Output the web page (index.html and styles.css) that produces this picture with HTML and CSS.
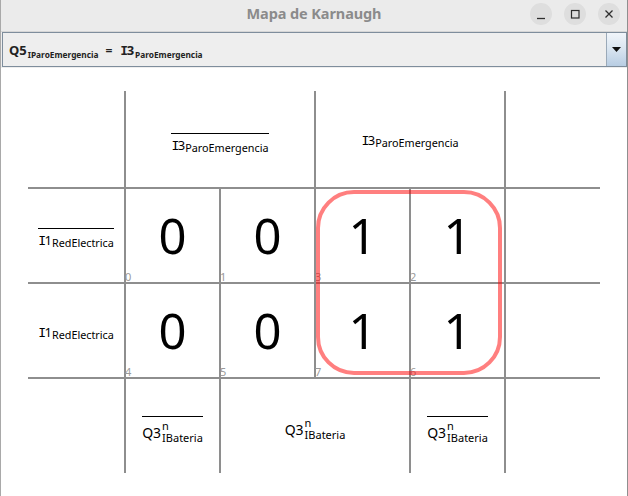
FILE: index.html
```html
<!DOCTYPE html>
<html>
<head>
<meta charset="utf-8">
<title>Mapa de Karnaugh</title>
<link rel="stylesheet" href="styles.css">
</head>
<body>
<div class="window">
  <div class="titlebar">
    <div class="tb-side"></div>
    <div class="title">Mapa de Karnaugh</div>
    <div class="tb-side controls">
      <span class="ctl"><svg width="22" height="22" viewBox="0 0 22 22"><line x1="7" y1="15.5" x2="15" y2="15.5" stroke="#2e2e2e" stroke-width="1.3"/></svg></span>
      <span class="ctl"><svg width="22" height="22" viewBox="0 0 22 22"><rect x="7.5" y="7.5" width="7.5" height="7.5" fill="none" stroke="#2e2e2e" stroke-width="1.2"/></svg></span>
      <span class="ctl"><svg width="22" height="22" viewBox="0 0 22 22"><path d="M7.5 7.5 L14.5 14.5 M14.5 7.5 L7.5 14.5" stroke="#2e2e2e" stroke-width="1.3"/></svg></span>
    </div>
  </div>
  <div class="toolbar">
    <div class="combo">
      <div class="combo-value">
        <span class="expr">Q5<sub>IParoEmergencia</sub></span>
        <span class="eq">=</span>
        <span class="expr"><span class="si">I</span>3<sub>ParoEmergencia</sub></span>
      </div>
      <div class="combo-arrow"><svg width="9" height="5" viewBox="0 0 9 5"><path d="M0 0 H9 L4.5 5 Z" fill="#111"/></svg></div>
    </div>
  </div>
  <div class="canvas">
    <div class="kmap">
      <!-- row 1 -->
      <div class="c"></div>
      <div class="c hdr span2 bl"><span class="lbl bar"><span class="si">I</span>3<sub>ParoEmergencia</sub></span></div>
      <div class="c hdr span2 bl"><span class="lbl"><span class="si">I</span>3<sub>ParoEmergencia</sub></span></div>
      <div class="c bl"></div>
      <!-- row 2 -->
      <div class="c side bt"><span class="lbl bar"><span class="si">I</span>1<sub>RedElectrica</sub></span></div>
      <div class="c cell bt bl"><span class="val">0</span><span class="idx">0</span></div>
      <div class="c cell bt bl"><span class="val">0</span><span class="idx">1</span></div>
      <div class="c cell bt bl"><span class="val">1</span><span class="idx">3</span></div>
      <div class="c cell bt bl"><span class="val">1</span><span class="idx">2</span></div>
      <div class="c bt bl"></div>
      <!-- row 3 -->
      <div class="c side bt"><span class="lbl"><span class="si">I</span>1<sub>RedElectrica</sub></span></div>
      <div class="c cell bt bl"><span class="val">0</span><span class="idx">4</span></div>
      <div class="c cell bt bl"><span class="val">0</span><span class="idx">5</span></div>
      <div class="c cell bt bl"><span class="val">1</span><span class="idx">7</span></div>
      <div class="c cell bt bl"><span class="val">1</span><span class="idx">6</span></div>
      <div class="c bt bl"></div>
      <!-- row 4 -->
      <div class="c bt"></div>
      <div class="c foot bt bl"><span class="lbl q bar">Q3<span class="ss"><span class="sp">n</span><span class="sb">IBateria</span></span></span></div>
      <div class="c foot span2 bt bl"><span class="lbl q">Q3<span class="ss"><span class="sp">n</span><span class="sb">IBateria</span></span></span></div>
      <div class="c foot bt bl"><span class="lbl q bar">Q3<span class="ss"><span class="sp">n</span><span class="sb">IBateria</span></span></span></div>
      <div class="c bt bl"></div>
      <!-- grouping of the 1s -->
      <div class="group"></div>
    </div>
  </div>
</div>
</body>
</html>
```

FILE: styles.css
```css
* { box-sizing: border-box; }
html, body { margin: 0; padding: 0; background: #ffffff; }
body { font-family: "Noto Sans", "Open Sans", sans-serif; }

.window {
  width: 628px;
  height: 496px;
  display: flex;
  flex-direction: column;
  border-left: 1px solid #a9a9a9;
  border-right: 1px solid #8f8f8f;
  overflow: hidden;
}

.titlebar {
  height: 32px;
  flex: none;
  background: #ebebeb;
  display: grid;
  grid-template-columns: 1fr auto 1fr;
  align-items: center;
  border-bottom: 1px solid #d6d6d6;
}
.title {
  font-size: 14.5px;
  font-weight: 700;
  color: #8b8b8b;
  padding-bottom: 5px;
  letter-spacing: -0.1px;
}
.controls {
  display: flex;
  justify-content: flex-end;
  gap: 12px;
  padding-right: 7px;
  padding-bottom: 4px;
}
.ctl {
  width: 22px;
  height: 22px;
  border-radius: 50%;
  background: #dedede;
  display: flex;
}

.toolbar {
  height: 36px;
  flex: none;
  background: #eeeeee;
  padding: 0 0 1px 1px;
}
.combo {
  height: 35px;
  border: 1px solid #7e8d9c;
  background: #eeeeee;
  display: flex;
}
.combo-value {
  flex: 1;
  display: flex;
  align-items: center;
  gap: 5px;
  padding-left: 6px;
  padding-top: 1px;
  font-weight: 700;
  font-size: 13px;
  color: #222;
  border-right: 1px solid #9aa9b8;
}
.combo-value .expr { white-space: nowrap; }
.combo-value sub {
  font-size: 8.3px;
  vertical-align: -3px;
  line-height: 1;
  margin-left: 1px;
}
.combo-value .eq { font-size: 12px; padding: 0 3px 0 2px; }
.combo-arrow {
  width: 19px;
  flex: none;
  background: linear-gradient(#f1f5fa, #dbe6f1 45%, #b8cde3);
  display: flex;
  align-items: center;
  justify-content: center;
}

.canvas {
  flex: 1;
  background: #ffffff;
  padding: 23px 0 0 27px;
}

.kmap {
  position: relative;
  display: grid;
  grid-template-columns: 96px 95px 95px 95px 95px 96px;
  grid-template-rows: 96px 95px 95px 96px;
}
.c {
  display: flex;
  align-items: center;
  justify-content: center;
  min-width: 0;
}
.span2 { grid-column: span 2; }
.bt { border-top: 2px solid #8e8e8e; }
.bl { border-left: 2px solid #8e8e8e; }

.hdr { padding-top: 5px; }
.hdr .lbl.bar { margin-top: 3px; }
.side { padding-top: 5px; }
.foot { padding-top: 9px; }

.lbl {
  display: inline-block;
  font-size: 13px;
  line-height: 1;
  color: #000;
  white-space: nowrap;
}
.lbl.bar {
  border-top: 1px solid #000;
  padding-top: 5px;
}
.lbl sub {
  font-size: 10.8px;
  vertical-align: -2px;
  line-height: 1;
}
.si {
  font-family: "DejaVu Sans Mono", monospace;
  font-weight: inherit;
  letter-spacing: -1.5px;
}
.lbl.q { font-size: 14px; }
.ss {
  display: inline-flex;
  flex-direction: column;
  vertical-align: 8px;
  line-height: 1;
  margin-left: 1px;
}
.sp { font-size: 11px; line-height: 8px; }
.sb { font-size: 11px; line-height: 16px; }

.cell {
  display: grid;
  grid-template: 1fr / 1fr;
}
.val {
  grid-area: 1 / 1;
  align-self: center;
  justify-self: center;
  font-size: 49px;
  line-height: 1;
  color: #000;
}
.idx {
  grid-area: 1 / 1;
  align-self: end;
  justify-self: start;
  font-size: 11px;
  line-height: 11px;
  color: #9a9a9a;
  margin-left: -1px;
}

.group {
  position: absolute;
  grid-column: 4 / 6;
  grid-row: 2 / 4;
  top: 3px;
  left: 2px;
  right: 2px;
  bottom: 2px;
  border: 4px solid rgba(255, 0, 0, 0.5);
  border-radius: 38px;
  pointer-events: none;
}
```
